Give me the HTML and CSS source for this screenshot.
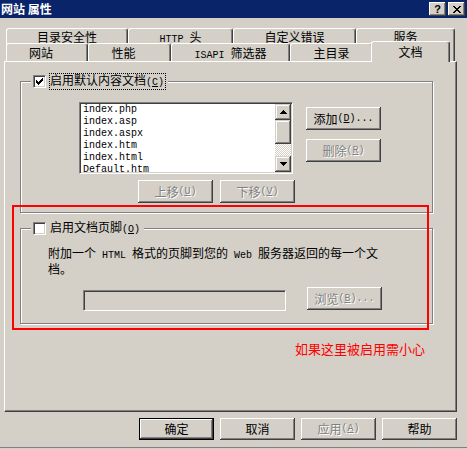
FILE: index.html
```html
<!DOCTYPE html>
<html lang="zh-CN">
<head>
  <meta charset="UTF-8" />
  <title>网站 属性</title>
  <link rel="stylesheet" href="styles.css">
</head>
<body>

  <div class="window">
    <div class="titlebar">
      <span class="title">网站 属性</span>
      <div class="caption-btns">
        <span class="cbtn">?</span>
        <span class="cbtn">
          <svg width="8" height="7" viewBox="0 0 8 7"><path d="M0 0h2v1h-2zM6 0h2v1h-2zM1 1h2v1h-2zM5 1h2v1h-2zM2 2h4v1h-4zM3 3h2v1h-2zM2 4h4v1h-4zM1 5h2v1h-2zM5 5h2v1h-2zM0 6h2v1h-2zM6 6h2v1h-2z"/></svg>
        </span>
      </div>
    </div>

    <div class="client">
      <div class="tabs">
        <div class="tabrow back">
          <div class="tab">目录安全性</div>
          <div class="tab"><span class="en after">HTTP</span>头</div>
          <div class="tab">自定义错误</div>
          <div class="tab">服务</div>
        </div>
        <div class="tabrow front">
          <div class="tab shift">网站</div>
          <div class="tab shift">性能</div>
          <div class="tab"><span class="en after">ISAPI</span>筛选器</div>
          <div class="tab">主目录</div>
          <div class="tab active">文档</div>
        </div>
      </div>

      <div class="panel">
        <div class="group docs">
          <div class="legend">
            <span class="check">
              <svg width="7" height="7" viewBox="0 0 7 7"><path d="M6 0h1v1h-1zM5 1h2v1h-2zM0 2h1v1h-1zM4 2h3v1h-3zM0 3h2v1h-2zM3 3h3v1h-3zM0 4h5v1h-5zM1 5h3v1h-3zM2 6h1v1h-1z"/></svg>
            </span>
            <span class="label focus">启用默认内容文档<span class="en">(<u>C</u>)</span></span>
          </div>

          <div class="docs-body">
            <div class="list-col">
              <div class="listbox">
                <ul class="items">
                  <li>index.php</li>
                  <li>index.asp</li>
                  <li>index.aspx</li>
                  <li>index.htm</li>
                  <li>index.html</li>
                  <li>Default.htm</li>
                </ul>
                <div class="vscroll">
                  <span class="sbtn">
                    <svg width="7" height="4" viewBox="0 0 7 4"><path d="M3 0h1v1h-1zM2 1h3v1h-3zM1 2h5v1h-5zM0 3h7v1h-7z"/></svg>
                  </span>
                  <span class="thumb"></span>
                  <span class="track"></span>
                  <span class="sbtn">
                    <svg width="7" height="4" viewBox="0 0 7 4"><path d="M0 0h7v1h-7zM1 1h5v1h-5zM2 2h3v1h-3zM3 3h1v1h-1z"/></svg>
                  </span>
                </div>
              </div>
              <div class="move-btns">
                <button class="btn" disabled>上移<span class="en">(<u>U</u>)</span></button>
                <button class="btn" disabled>下移<span class="en">(<u>V</u>)</span></button>
              </div>
            </div>
            <div class="side-btns">
              <button class="btn">添加<span class="en">(<u>D</u>)...</span></button>
              <button class="btn" disabled>删除<span class="en">(<u>R</u>)</span></button>
            </div>
          </div>
        </div>

        <div class="group footer-doc">
          <div class="legend">
            <span class="check"></span>
            <span class="label">启用文档页脚<span class="en">(<u>O</u>)</span></span>
          </div>
          <p class="desc">附加一个<span class="en around">HTML</span>格式的页脚到您的<span class="en around">Web</span>服务器返回的每一个文<br>档。</p>
          <div class="file-row">
            <span class="textbox"></span>
            <button class="btn" disabled>浏览<span class="en">(<u>B</u>)...</span></button>
          </div>
        </div>
      </div>

      <div class="actions">
        <button class="btn default">确定</button>
        <button class="btn">取消</button>
        <button class="btn" disabled>应用<span class="en">(<u>A</u>)</span></button>
        <button class="btn">帮助</button>
      </div>
    </div>

    <!-- red annotation drawn over the screenshot -->
    <div class="mark-box"></div>
    <div class="mark-text">如果这里被启用需小心</div>
  </div>

</body>
</html>
```

FILE: styles.css
```css
:root {
  --face: #d4d0c8;
  --shadow: #808080;
  --dark: #404040;
  --title: #0a246a;
}

* {
  box-sizing: border-box;
}

body {
  margin: 0;
  background: var(--face);
  font-family: "Noto Sans CJK SC", sans-serif;
  font-size: 12px;
  color: #000;
}

.en {
  font-family: "Liberation Mono", monospace;
  font-size: 10px;
}

.en.after {
  margin-right: 6px;
}

.en.around {
  margin: 0 6px;
}

u {
  text-decoration: underline;
}

.window {
  position: relative;
  width: 467px;
  height: 449px;
  background: var(--face);
  box-shadow: inset 0 -1px var(--face), inset 0 -2px var(--shadow);
  overflow: hidden;
}

/* title bar */
.titlebar {
  height: 18px;
  background: var(--title);
  color: #fff;
  display: flex;
  align-items: center;
  justify-content: space-between;
  padding: 0 2px 0 1px;
}

.title {
  font-weight: bold;
  line-height: 14px;
}

.caption-btns {
  display: flex;
  gap: 2px;
}

.cbtn {
  width: 17px;
  height: 14px;
  display: flex;
  align-items: center;
  justify-content: center;
  background: var(--face);
  color: #000;
  font: bold 11px "Liberation Sans", sans-serif;
  box-shadow: inset -1px -1px var(--dark), inset 1px 1px #fff, inset -2px -2px var(--shadow);
}

/* tabs */
.client {
  padding: 10px 0 0 4px;
}

.tabs {
  position: relative;
  z-index: 1;
  margin-left: 2px;
}

.tabrow {
  display: grid;
  height: 18px;
}

.back {
  grid-template-columns: 122px 105px 123px 99px;
}

.front {
  grid-template-columns: 82px 83px 119px 83px 75px;
  margin-top: -3px;
}

.tab {
  height: 18px;
  padding-top: 1px;
  background: var(--face);
  border: 1px solid #fff;
  border-right-color: var(--dark);
  border-bottom: 0;
  border-radius: 3px 3px 0 0;
  box-shadow: inset -1px 0 var(--shadow);
  text-align: center;
  line-height: 15px;
  white-space: nowrap;
}

.back .tab {
  height: 33px;
  padding-top: 0;
}

.tab.shift {
  padding-right: 12px;
}

.tab.active {
  margin: -2px -2px 0;
  height: 21px;
  padding-top: 2px;
}

/* panel */
.panel {
  width: 453px;
  height: 351px;
  border: 1px solid;
  border-color: #fff var(--dark) var(--dark) #fff;
  box-shadow: inset -1px -1px var(--shadow);
}

.group {
  width: 413px;
  margin-left: 15px;
  border: 1px solid var(--shadow);
  box-shadow: 1px 1px #fff, inset 1px 1px #fff;
}

.docs {
  margin-top: 19px;
  padding-bottom: 9px;
}

.footer-doc {
  margin-top: 15px;
  padding-bottom: 12px;
}

.legend {
  display: flex;
  align-items: center;
  gap: 3px;
  width: max-content;
  height: 13px;
  margin: -7px 0 0 10px;
  padding: 0 2px;
  background: var(--face);
}

.check {
  width: 13px;
  height: 13px;
  display: flex;
  align-items: center;
  justify-content: center;
  background: #fff;
  border: 1px solid;
  border-color: var(--shadow) #fff #fff var(--shadow);
  box-shadow: inset 1px 1px var(--dark), inset -1px -1px var(--face);
}

.label {
  border: 1px dotted transparent;
  padding-right: 1px;
  line-height: 12px;
}

.label.focus {
  border-color: #000;
}

/* default documents list */
.docs-body {
  display: flex;
  align-items: flex-start;
  margin: 14px 0 0 58px;
}

.list-col {
  width: 214px;
  display: flex;
  flex-direction: column;
}

.listbox {
  height: 72px;
  display: flex;
  background: #fff;
  border: 1px solid;
  border-color: var(--shadow) #fff #fff var(--shadow);
  box-shadow: inset 1px 1px var(--dark), inset -1px -1px var(--face);
  overflow: hidden;
}

.items {
  flex: 1;
  margin: 0;
  padding: 1px 0 0 3px;
  list-style: none;
  font: 10px/12px "Liberation Mono", monospace;
}

.vscroll {
  width: 16px;
  margin: 1px 1px 1px 0;
  display: flex;
  flex-direction: column;
}

.sbtn,
.thumb {
  background: var(--face);
  box-shadow: inset -1px -1px var(--dark), inset 1px 1px var(--face), inset -2px -2px var(--shadow), inset 2px 2px #fff;
}

.sbtn {
  height: 16px;
  display: flex;
  align-items: center;
  justify-content: center;
}

.thumb {
  height: 24px;
}

.track {
  flex: 1;
  background: repeating-conic-gradient(#fff 0 25%, var(--face) 0 50%) 0 0 / 2px 2px;
}

.move-btns {
  display: flex;
  justify-content: flex-end;
  gap: 7px;
  margin: 6px -2px 0 0;
}

.side-btns {
  display: flex;
  flex-direction: column;
  gap: 9px;
  margin: 5px 0 0 13px;
}

/* buttons */
.btn {
  width: 75px;
  height: 23px;
  padding: 0;
  border: 0;
  display: flex;
  align-items: center;
  justify-content: center;
  background: var(--face);
  color: #000;
  font-family: "Noto Sans CJK SC", sans-serif;
  font-size: 12px;
  line-height: 12px;
  box-shadow: inset -1px -1px var(--dark), inset 1px 1px #fff, inset -2px -2px var(--shadow);
}

.btn:disabled {
  color: var(--shadow);
  text-shadow: 1px 1px 0 #fff;
}

.btn.default {
  border: 1px solid #000;
}

/* footer group */
.desc {
  width: 335px;
  margin: 11px 0 0 27px;
  line-height: 13px;
}

.file-row {
  display: flex;
  align-items: flex-start;
  gap: 21px;
  margin: 12px 0 0 62px;
}

.textbox {
  width: 203px;
  height: 21px;
  margin-top: 3px;
  background: var(--face);
  border: 1px solid;
  border-color: var(--shadow) #fff #fff var(--shadow);
  box-shadow: inset 1px 1px var(--dark), inset -1px -1px var(--face);
}

/* dialog buttons */
.actions {
  width: 453px;
  display: flex;
  justify-content: flex-end;
  gap: 6px;
  margin-top: 6px;
}

.actions .btn {
  height: 22px;
}

/* annotation */
.mark-box {
  position: absolute;
  left: 12px;
  top: 205px;
  width: 417px;
  height: 125px;
  border: 2px solid #f00;
}

.mark-text {
  position: absolute;
  left: 295px;
  top: 340px;
  color: #f00;
  font-size: 13px;
  line-height: 18px;
}
```
